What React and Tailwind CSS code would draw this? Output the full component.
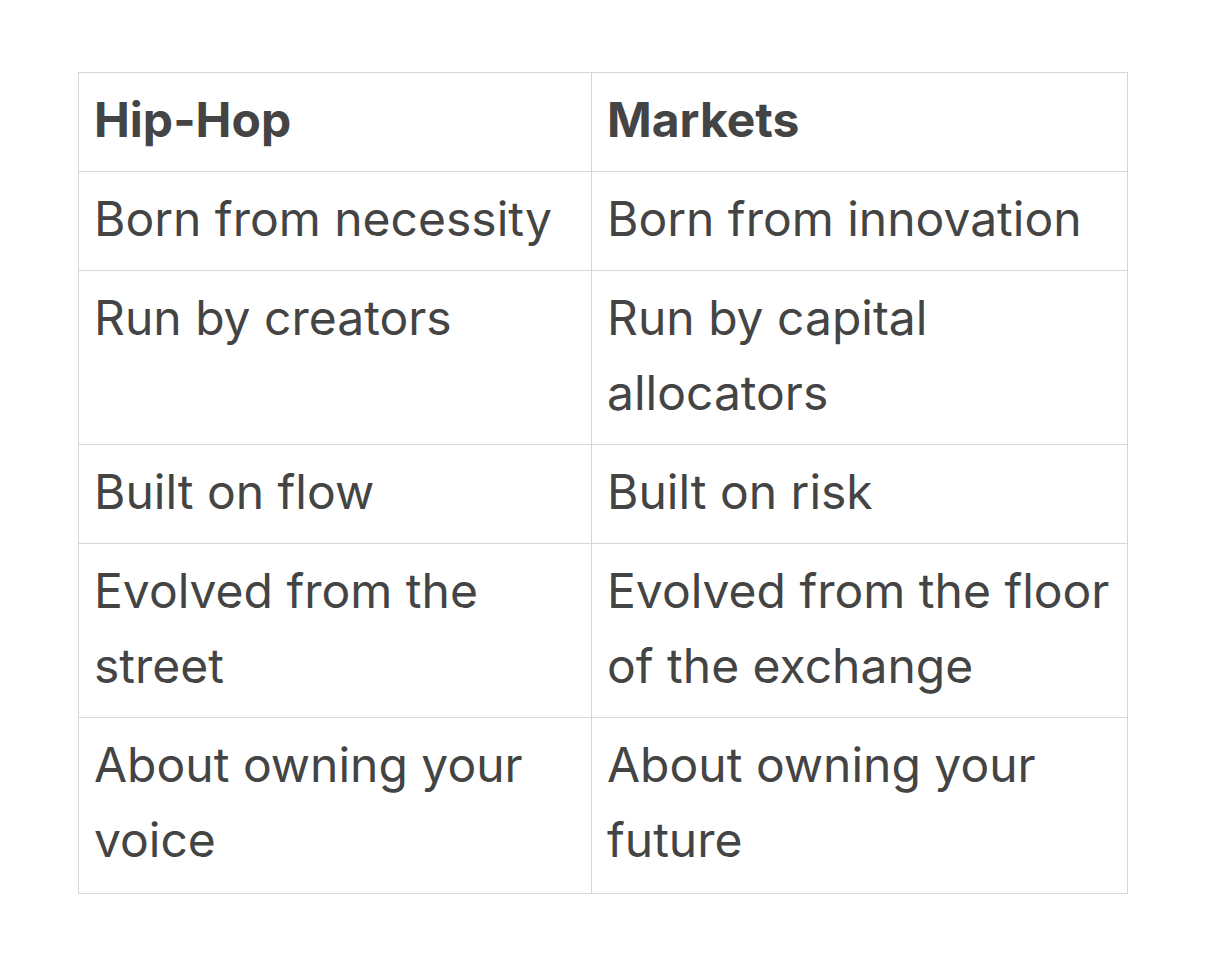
const rows = [
  ['Born from necessity', 'Born from innovation'],
  ['Run by creators', 'Run by capital allocators'],
  ['Built on flow', 'Built on risk'],
  ['Evolved from the street', 'Evolved from the floor of the exchange'],
  ['About owning your voice', 'About owning your future'],
];

export default function App() {
  return (
    <div className="min-h-screen bg-white pt-[72px] pl-[78px]" style={{ fontFamily: 'Inter, "Noto Sans", sans-serif' }}>
      <table className="border-collapse text-[48px] leading-[75px] text-[#444444]">
        <colgroup>
          <col className="w-[513px]" />
          <col className="w-[536px]" />
        </colgroup>
        <thead>
          <tr>
            <th className="border border-[#d6d6d6] pl-[15px] pr-3 pt-[9px] pb-[14px] text-left align-top font-bold">Hip-Hop</th>
            <th className="border border-[#d6d6d6] pl-[15px] pr-3 pt-[9px] pb-[14px] text-left align-top font-bold">Markets</th>
          </tr>
        </thead>
        <tbody>
          {rows.map(([a, b], i) => {
            const pad = i === rows.length - 1 ? 'pb-4' : 'pb-[14px]';
            return (
              <tr key={a}>
                <td className={`border border-[#d6d6d6] pl-[15px] pr-3 pt-[9px] ${pad} align-top`}>{a}</td>
                <td className={`border border-[#d6d6d6] pl-[15px] pr-3 pt-[9px] ${pad} align-top`}>{b}</td>
              </tr>
            );
          })}
        </tbody>
      </table>
    </div>
  );
}
